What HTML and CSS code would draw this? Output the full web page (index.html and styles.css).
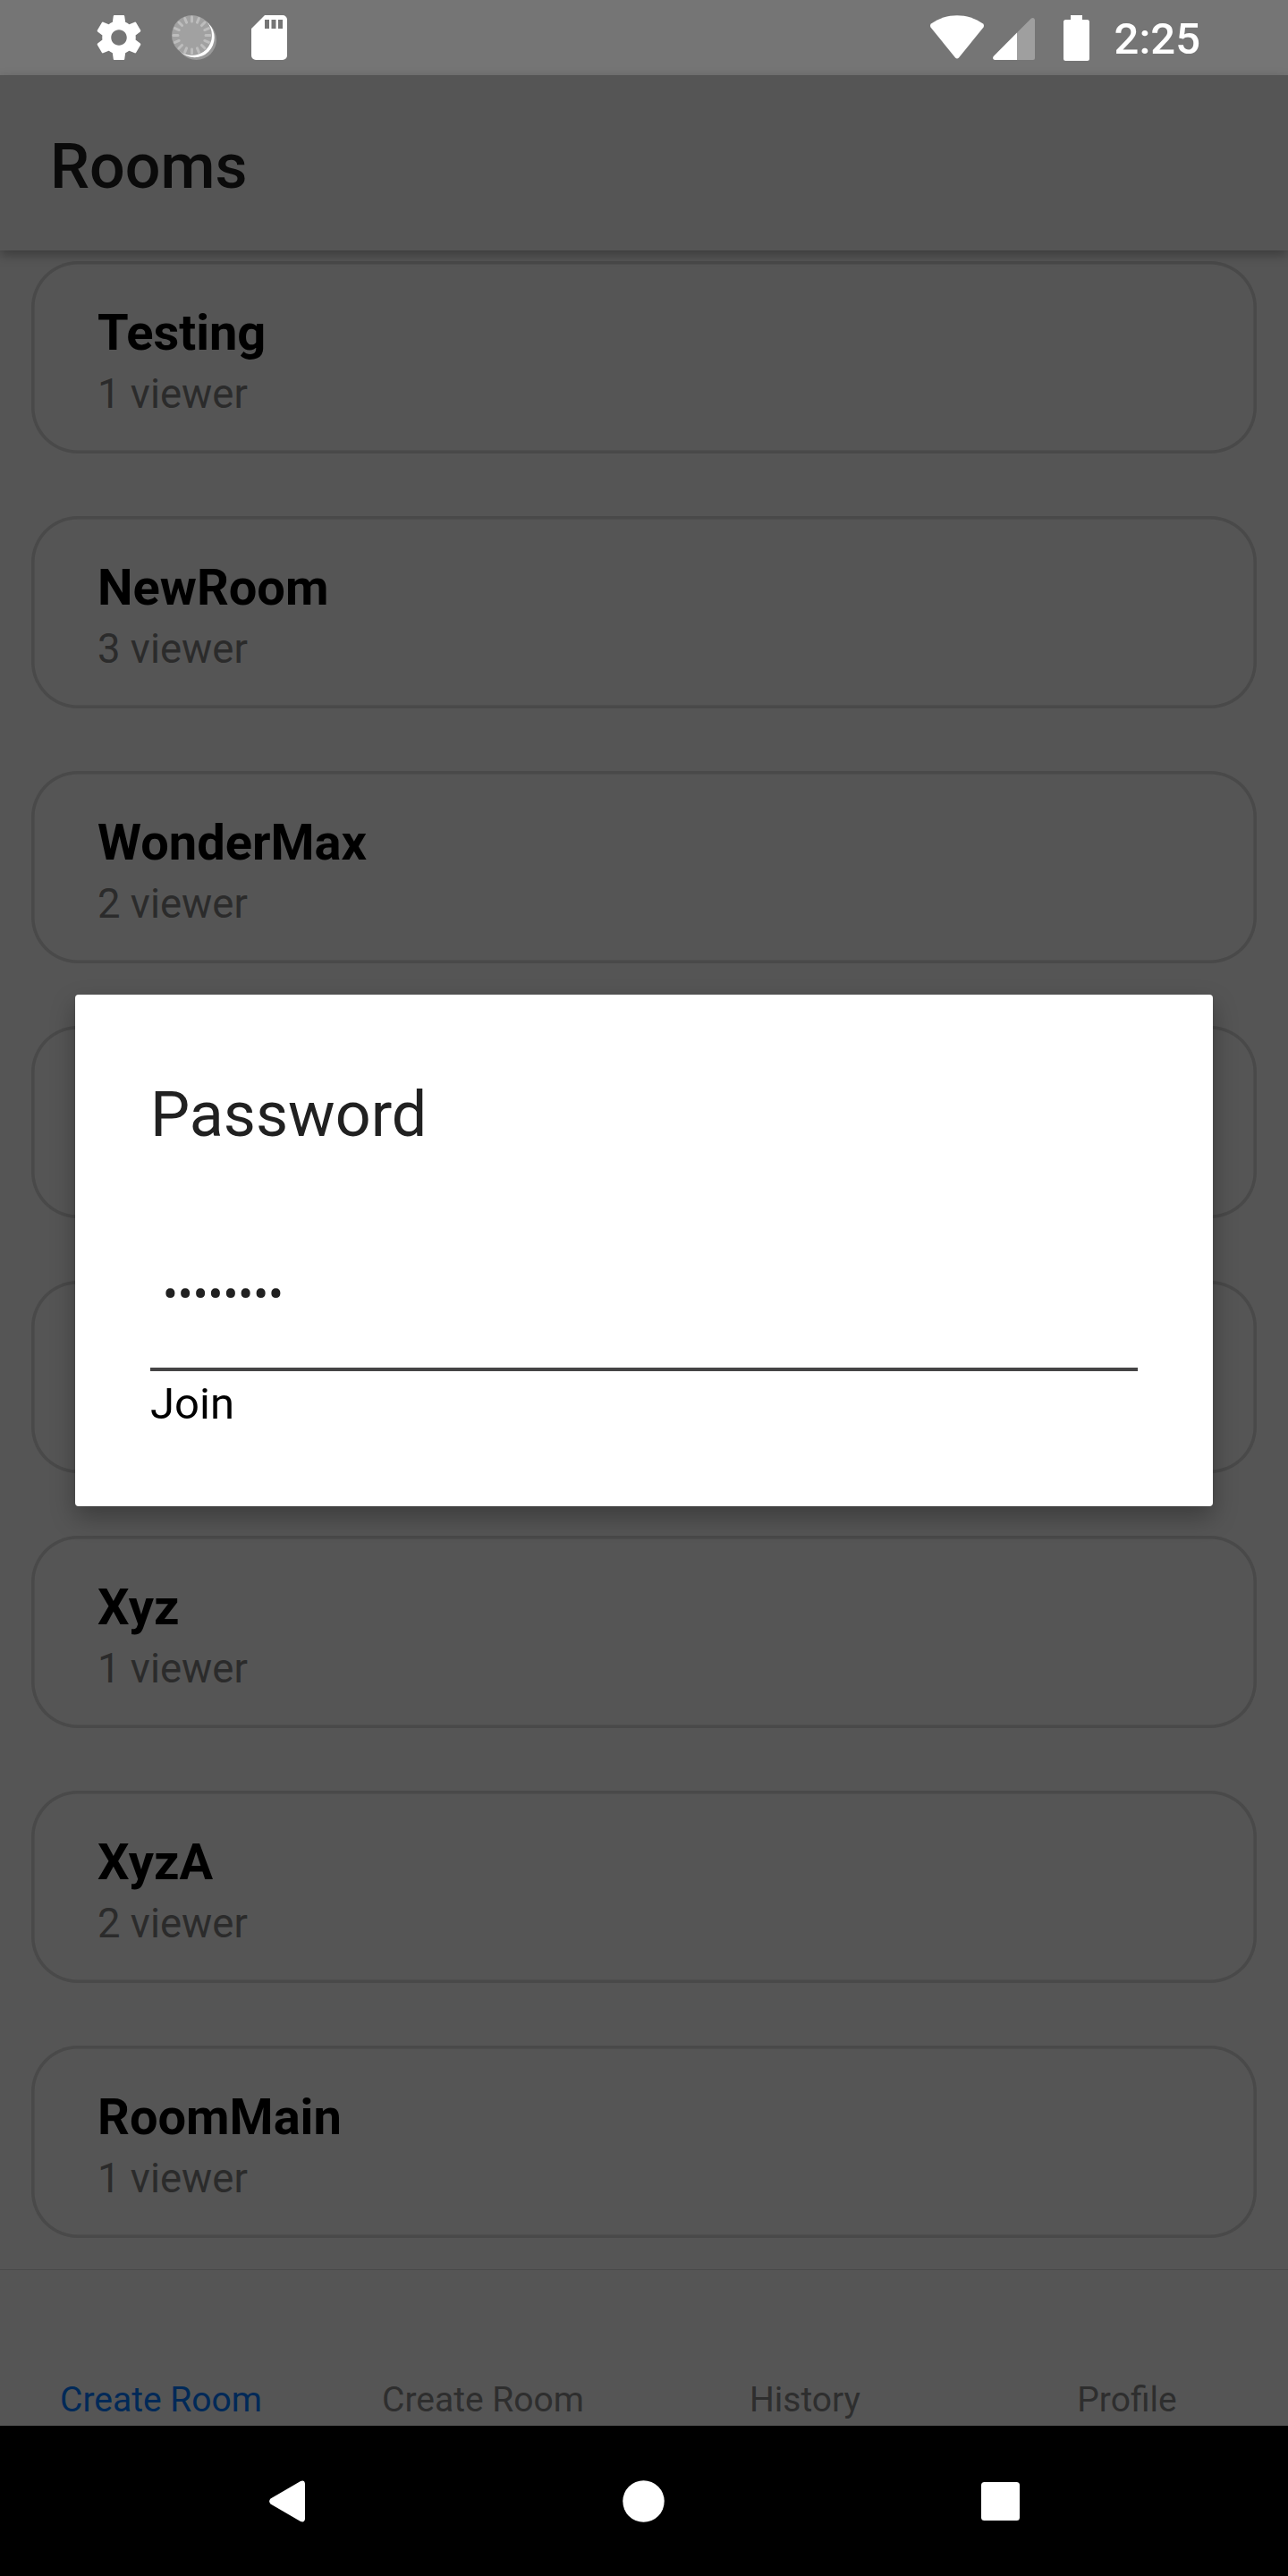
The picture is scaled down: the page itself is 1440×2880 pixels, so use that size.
FILE: index.html
```html
<!DOCTYPE html>
<html lang="en">
<head>
<meta charset="utf-8">
<title>Rooms</title>
<link rel="stylesheet" href="styles.css">
</head>
<body>
<div class="screen">
  <div class="status">
    <div class="status-left">
      <svg width="50" height="50" viewBox="2 2 20 20" fill="#fff"><path d="M19.43 12.98c.04-.32.07-.64.07-.98s-.03-.66-.07-.98l2.11-1.65c.19-.15.24-.42.12-.64l-2-3.46c-.12-.22-.39-.3-.61-.22l-2.49 1c-.52-.4-1.08-.73-1.69-.98l-.38-2.65C14.46 2.18 14.25 2 14 2h-4c-.25 0-.46.18-.49.42l-.38 2.65c-.61.25-1.17.59-1.69.98l-2.49-1c-.23-.09-.49 0-.61.22l-2 3.46c-.13.22-.07.49.12.64l2.11 1.65c-.04.32-.07.65-.07.98s.03.66.07.98l-2.11 1.65c-.19.15-.24.42-.12.64l2 3.46c.12.22.39.3.61.22l2.49-1c.52.4 1.08.73 1.69.98l.38 2.65c.03.24.24.42.49.42h4c.25 0 .46-.18.49-.42l.38-2.65c.61-.25 1.17-.59 1.69-.98l2.49 1c.23.09.49 0 .61-.22l2-3.46c.12-.22.07-.49-.12-.64l-2.11-1.65zM12 15.5c-1.93 0-3.5-1.57-3.5-3.5s1.57-3.5 3.5-3.5 3.5 1.57 3.5 3.5-1.57 3.5-3.5 3.5z"/></svg>
      <svg width="50" height="50" viewBox="0 0 50 50">
        <circle cx="27.5" cy="27.5" r="22.5" fill="#999"/>
        <circle cx="25.5" cy="25" r="22.2" fill="#fff"/>
        <circle cx="22.5" cy="22.5" r="22.5" fill="#a1a1a1"/>
        <g stroke="#bdbdbd" stroke-width="3" stroke-linecap="round">
          <path d="M38 22.5h5M7 22.5h-5M22.5 38v5M22.5 7v-5"/>
          <path d="M38 22.5h5M7 22.5h-5M22.5 38v5M22.5 7v-5" transform="rotate(22.5 22.5 22.5)"/>
          <path d="M38 22.5h5M7 22.5h-5M22.5 38v5M22.5 7v-5" transform="rotate(45 22.5 22.5)"/>
          <path d="M38 22.5h5M7 22.5h-5M22.5 38v5M22.5 7v-5" transform="rotate(67.5 22.5 22.5)"/>
        </g>
      </svg>
      <svg width="40" height="50" viewBox="0 0 40 50"><path fill="#fff" fill-rule="evenodd" d="M15 0H35a5 5 0 0 1 5 5V45a5 5 0 0 1-5 5H5a5 5 0 0 1-5-5V15ZM15 5V15h5V5ZM22.5 5V15h5V5ZM30 5V15h5V5Z"/></svg>
    </div>
    <div class="status-right">
      <svg width="60" height="50" viewBox="0 0 60 50"><path fill="#fff" d="M1 9.500C18-3 42-3 59 9.500Q60.700 11 59.500 13.500L32 47.500Q30 49.500 28 47.500L.5 13.500Q-.7 11 1 9.500Z"/></svg>
      <svg class="signal" width="47" height="50" viewBox="0 0 47 50"><path fill="#9f9f9f" d="M27 19.500 43 3.500Q46 2 47 5V48Q47 50 45 50H27Z"/><path fill="#fff" d="M27 19.500V50H2Q-1 49 .7 46Z"/></svg>
      <svg class="battery" width="29" height="51" viewBox="0 0 29 51"><path fill="#fff" d="M8 0H21V5H26.500Q29 5 29 7.500V48.500Q29 51 26.500 51H2.500Q0 51 0 48.500V7.500Q0 5 2.500 5H8Z"/></svg>
      <span class="clock">2:25</span>
    </div>
  </div>

  <header class="header"><h1 class="header-title">Rooms</h1></header>

  <main class="rooms">
    <article class="room"><h2 class="room-name">Testing</h2><p class="room-viewers">1 viewer</p></article>
    <article class="room"><h2 class="room-name">NewRoom</h2><p class="room-viewers">3 viewer</p></article>
    <article class="room"><h2 class="room-name">WonderMax</h2><p class="room-viewers">2 viewer</p></article>
    <article class="room"></article>
    <article class="room"></article>
    <article class="room"><h2 class="room-name">Xyz</h2><p class="room-viewers">1 viewer</p></article>
    <article class="room"><h2 class="room-name">XyzA</h2><p class="room-viewers">2 viewer</p></article>
    <article class="room"><h2 class="room-name">RoomMain</h2><p class="room-viewers">1 viewer</p></article>
  </main>

  <nav class="tabs">
    <span class="tab tab-active">Create Room</span>
    <span class="tab">Create Room</span>
    <span class="tab">History</span>
    <span class="tab">Profile</span>
  </nav>

  <div class="navbar">
    <svg width="40" height="47" viewBox="0 0 40 47"><path fill="#fff" d="M1.500 20.500 35 1Q39.500-.8 40 4V43Q39.500 47.800 35 46L1.500 26.500Q-1.200 23.500 1.500 20.500Z"/></svg>
    <svg width="47" height="47" viewBox="0 0 47 47"><circle cx="23.5" cy="23.5" r="23.2" fill="#fff"/></svg>
    <svg width="43" height="43" viewBox="0 0 43 43"><rect width="43" height="43" rx="3.5" fill="#fff"/></svg>
  </div>

  <section class="dialog">
    <h2 class="dialog-title">Password</h2>
    <div class="field">••••••••</div>
    <div class="join">Join</div>
  </section>
</div>
</body>
</html>
```
FILE: styles.css
```css
* { box-sizing: border-box; margin: 0; padding: 0; }
body { background: #555; font-family: Roboto, "Liberation Sans", sans-serif; }
svg { display: block; flex: none; }
.screen {
  position: relative;
  display: flex;
  flex-direction: column;
  width: 1440px;
  height: 2880px;
  overflow: hidden;
  background: #555;
}

.status {
  display: flex;
  flex: none;
  justify-content: space-between;
  height: 84px;
  padding: 0 98px 0 108px;
  background: #757575;
}
.status-left { display: flex; align-items: center; }
.status-left svg + svg { margin-left: 34px; }
.status-left svg + svg + svg { margin-left: 39px; }
.status-right { display: flex; align-items: center; }
.signal { margin-left: 10px; }
.battery { margin-left: 32px; }
.clock {
  margin-left: 28px;
  padding-top: 4px;
  color: #fff;
  font-size: 49px;
  font-weight: 500;
  line-height: 58px;
}

.header {
  z-index: 1;
  display: flex;
  flex: none;
  align-items: center;
  height: 196px;
  padding: 8px 56px 0;
  background: #555;
  box-shadow: 0 5px 12px rgba(0, 0, 0, .3);
}
.header-title { color: #0a0a0a; font-size: 70px; font-weight: 500; line-height: 82px; }

.rooms {
  display: flex;
  flex: none;
  flex-direction: column;
  gap: 70px;
  height: 2257px;
  padding: 12px 35px 0;
}
.room {
  flex: none;
  height: 215px;
  padding: 47px 74px 0;
  border-radius: 52px;
  box-shadow: inset 0 0 0 3.5px #494949;
}
.room-name { color: #000; font-size: 56px; font-weight: 700; line-height: 66px; }
.room-viewers { margin-top: 8px; color: #2b2b2b; font-size: 45.5px; line-height: 56px; }

.tabs {
  display: grid;
  flex: none;
  grid-template-columns: repeat(4, 1fr);
  align-items: end;
  height: 175px;
  padding-bottom: 6px;
  border-top: 1px solid #494949;
}
.tab { color: #2e2e2e; font-size: 39px; line-height: 46px; text-align: center; }
.tab-active { color: #002958; }

.navbar {
  display: flex;
  flex: none;
  align-items: center;
  gap: 354.5px;
  height: 168px;
  padding-left: 301px;
  background: #000;
}

.dialog {
  position: absolute;
  z-index: 2;
  top: 1112px;
  left: 84px;
  width: 1272px;
  height: 572px;
  padding: 93px 84px 0;
  border-radius: 4px;
  background: #fff;
  box-shadow: 0 12px 28px rgba(0, 0, 0, .3);
}
.dialog-title { color: #212121; font-size: 70px; font-weight: 400; line-height: 82px; }
.field {
  height: 246px;
  padding: 131px 14px 0;
  border-bottom: 4px solid #454445;
  color: #212121;
  font-size: 50px;
  line-height: 58px;
}
.join { margin-top: 8px; color: #000; font-size: 49px; line-height: 58px; }
```
